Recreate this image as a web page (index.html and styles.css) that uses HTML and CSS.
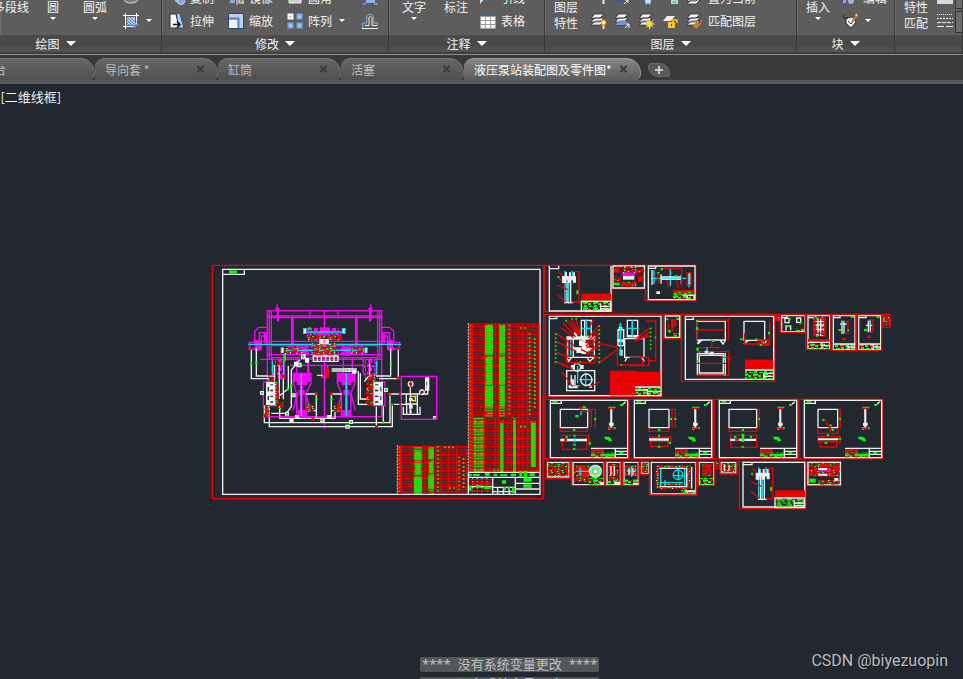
FILE: index.html
```
<!DOCTYPE html>
<html lang="zh-CN">
<head>
<meta charset="utf-8">
<title>液压泵站装配图及零件图</title>
<link rel="stylesheet" href="styles.css">
</head>
<body>
<header class="ribbon">
  <section class="panel panel-draw">
    <div class="tools">
      <button class="large">多段线</button>
      <button class="large">圆<i class="caret"></i></button>
      <button class="large">圆弧<i class="caret"></i></button>
      <div class="stack">
        <button class="tool" aria-label="椭圆"><svg class="icon" viewBox="0 0 16 16"><ellipse cx="8" cy="9" rx="7" ry="4" fill="#777" stroke="#ddd"/></svg></button>
        <button class="tool" aria-label="图案填充"><svg class="icon" viewBox="0 0 16 16"><path d="M2.500 0v16M13.500 0v11M0 2.500h16M0 13.500h10" stroke="#fff"/><path d="M4 4h8v8H4z" fill="#a9cbf5"/><path d="M4 7l5 5M4 4l8 8M7 4l5 5M4 10l2 2" stroke="#4e80c8"/><path d="M10 15l4-7M9 12h7M12 15v-5" stroke="#6fa8ff"/></svg><i class="caret"></i></button>
      </div>
    </div>
    <h2>绘图<i class="drop"></i></h2>
  </section>
  <section class="panel panel-modify">
    <div class="tools">
      <div class="stack">
        <button class="tool"><svg class="icon" viewBox="0 0 16 16"><circle cx="9" cy="9" r="3.500" fill="#9eb8dc"/><circle cx="12" cy="11" r="3.500" fill="#7fa4df" stroke="#cfe1ff"/></svg>复制</button>
        <button class="tool"><svg class="icon" viewBox="0 0 16 16"><path d="M1 1h6l3 14H1z" fill="#f4f4f4" stroke="#333"/><path d="M8 1h3l4 14h-5z" fill="#a9cdf2"/><path d="M11 1l4 14h-5" fill="none" stroke="#244d80"/><path d="M4 11.500h7M8 8.500l3 3-3 3" fill="none" stroke="#111" stroke-width="1.500"/></svg>拉伸</button>
      </div>
      <div class="stack">
        <button class="tool"><svg class="icon" viewBox="0 0 16 16"><path d="M1 13L7 3v10z" fill="#86aee5"/><path d="M9 2v13M11 13V3l5 10z" stroke="#eee" fill="#888"/></svg>镜像</button>
        <button class="tool"><svg class="icon" viewBox="0 0 16 16"><path d="M.5.5h15v15h-15z" fill="#b8d3f4" stroke="#2c4468"/><path d="M1 5.500h9.500V15" fill="none" stroke="#5786c5" stroke-width="2"/><path d="M1 7h8v8H1z" fill="#f2f2f2"/></svg>缩放</button>
      </div>
      <div class="stack stack-wide">
        <button class="tool"><svg class="icon" viewBox="0 0 16 16"><path d="M2 2h12v11H2z" fill="#ccd" stroke="#eee"/></svg>圆角</button>
        <button class="tool"><svg class="icon" viewBox="0 0 16 16"><path d="M1.500 1.500h4v4h-4z" fill="#aaa" stroke="#fff" stroke-width="2"/><path d="M10.500 1.500h4v4h-4zM1.500 10.500h4v4h-4zM10.500 10.500h4v4h-4z" fill="#c5dcfa" stroke="#78a8ee" stroke-width="2"/></svg>阵列<i class="caret"></i></button>
      </div>
      <div class="stack stack-icon">
        <button class="tool" aria-label="分解"><svg class="icon" viewBox="0 0 16 16"><path d="M4 5h9v8H4z" fill="#8fb4eb"/><path d="M1 14h3M12 14h4" stroke="#9cf"/></svg></button>
        <button class="tool" aria-label="偏移"><svg class="icon" viewBox="0 0 16 16" fill="none"><path d="M.7 15V10h4V5c0-5 7-5 7 0v5h4v2" stroke="#82b2f3"/><path d="M3 12.500h4V5c0-2 3-2 3 0v7.500h5M0 15.500h16" stroke="#eee"/></svg></button>
      </div>
    </div>
    <h2>修改<i class="drop"></i></h2>
  </section>
  <section class="panel panel-note">
    <div class="tools">
      <button class="large">文字<i class="caret"></i></button>
      <button class="large">标注</button>
      <div class="stack">
        <button class="tool"><svg class="icon" viewBox="0 0 16 16"><path d="M0 8h5l-5 6z" fill="#ddd"/></svg>引线</button>
        <button class="tool"><svg class="icon" viewBox="0 0 16 16"><path d="M0 0h16v16H0z" fill="#999"/><path d="M0 0h16v3H0z" fill="#4a6284"/><path d="M1 4h4v3H1zM6 4h4v3H6zM11 4h4v3h-4zM1 8h4v3H1zM6 8h4v3H6zM11 8h4v3h-4zM1 12h4v3H1zM6 12h4v3H6zM11 12h4v3h-4z" fill="#fff"/></svg>表格</button>
      </div>
    </div>
    <h2>注释<i class="drop"></i></h2>
  </section>
  <section class="panel panel-layer">
    <svg class="sprite" aria-hidden="true"><defs>
      <g id="sheets" stroke="#252525" stroke-width=".7"><path d="M0 12l4-4h9l-4 4zM0 9l4-4h9L9 9zM0 5l4-4h9L9 5z" fill="#f5f5f5"/></g>
    </defs></svg>
    <div class="tools">
      <button class="large">图层<br>特性</button>
      <div class="icon-grid">
        <button class="tool" aria-label="关闭图层"><svg class="icon" viewBox="0 0 16 16"><path d="M12.500 10v4" stroke="#eee" stroke-width="2"/></svg></button>
        <button class="tool" aria-label="隔离图层"><svg class="icon" viewBox="0 0 16 16"><path d="M0 12l3-3h6l-3 3z" fill="#315ba0"/><path d="M9 14l4-4M10 10h3v3" stroke="#eee" fill="none"/></svg></button>
        <button class="tool" aria-label="冻结图层"><svg class="icon" viewBox="0 0 16 16"><path d="M7 8l4 6M11 8l-4 6M6 11h6" stroke="#b9dcff" stroke-width="2"/></svg></button>
        <button class="tool" aria-label="锁定图层"><svg class="icon" viewBox="0 0 16 16"><path d="M8 9h7v5H8z" fill="#b4dbda"/><path d="M10 12h3" stroke="#387"/></svg></button>
        <button class="tool" aria-label="当前图层"><svg class="icon" viewBox="0 0 16 16"><use href="#sheets" y="2"/></svg></button>
        <button class="tool" aria-label="打开所有图层"><svg class="icon" viewBox="0 0 16 16"><use href="#sheets"/><path d="M12.500 11v5" stroke="#ddd" stroke-width="2"/><circle cx="12.500" cy="9.500" r="2.500" fill="#fff0a8" stroke="#f38a0c"/></svg></button>
        <button class="tool" aria-label="取消隔离"><svg class="icon" viewBox="0 0 16 16"><use href="#sheets"/><path d="M0 12l4-4h9l-4 4z" fill="#659de4"/><path d="M10 15l4-4M10.500 11H14v4" stroke="#fff" fill="none"/></svg></button>
        <button class="tool" aria-label="解冻图层"><svg class="icon" viewBox="0 0 16 16"><use href="#sheets"/><path d="M10.500 6v10M5.500 11h10M7 7.500l7 7M14 7.500l-7 7" stroke="#ffe898"/><circle cx="10.500" cy="11" r="3" fill="#ffd51f"/></svg></button>
        <button class="tool" aria-label="解锁图层"><svg class="icon" viewBox="0 0 16 16"><path d="M0 8l4-5h8L8 8z" fill="#f1f1f1"/><path d="M5 9h7v6H5z" fill="#ffc52a"/><path d="M10 9V7h4v3" stroke="#ffc52a" fill="none" stroke-width="1.500"/><path d="M8.500 11v2" stroke="#333"/></svg></button>
        <button class="tool" aria-label="匹配"><svg class="icon" viewBox="0 0 16 16"><use href="#sheets"/><path d="M6 12l4-3 4 2-4 5-4-2z" fill="#c77a27"/><path d="M13 11l2-4" stroke="#b5702b" stroke-width="2"/></svg></button>
      </div>
      <div class="stack">
        <button class="tool">置为当前</button>
        <button class="tool">匹配图层</button>
      </div>
    </div>
    <h2>图层<i class="drop"></i></h2>
  </section>
  <section class="panel panel-block">
    <div class="tools">
      <button class="large">插入<i class="caret"></i></button>
      <div class="stack">
        <button class="tool"><svg class="icon" viewBox="0 0 16 16"><path d="M0 10h3v3H0z" fill="#79aaf0"/><circle cx="8" cy="11" r="3" fill="#a7b2cc"/></svg>编辑</button>
        <button class="tool" aria-label="编辑属性"><svg class="icon" viewBox="0 0 16 16"><path d="M3 5l7-1 3 5-5 6-5-5z" fill="#f2f2f2" stroke="#333"/><path d="M0 1c0 5 3 5 5 4" stroke="#111" fill="none"/><path d="M5 8l3 3 3-4" stroke="#333" fill="none"/><path d="M9 9l5-7" stroke="#d77821" stroke-width="2"/><path d="M13 3l1-2" stroke="#f5c38c" stroke-width="2"/></svg><i class="caret"></i></button>
      </div>
    </div>
    <h2>块<i class="drop"></i></h2>
  </section>
  <section class="panel panel-props">
    <div class="tools">
      <button class="large">特性<br>匹配</button>
      <div class="stack stack-icon">
        <button class="tool" aria-label="线宽"><svg class="icon" viewBox="0 0 16 16"><path d="M0 9h16v5H0z" fill="#d8d8d8"/></svg></button>
        <button class="tool" aria-label="线型"><svg class="icon" viewBox="0 0 16 16" stroke="#eee"><path d="M0 1.500h16" stroke-dasharray="1 1"/><path d="M0 5.500h16" stroke-dasharray="2 1"/><path d="M0 9.500h16" stroke-dasharray="4 1"/><path d="M0 13.500h16" stroke-dasharray="7 2"/></svg></button>
      </div>
      <div class="fields"><button aria-label="线宽列表"></button><button aria-label="线型列表"></button></div>
    </div>
    <h2></h2>
  </section>
</header>
<nav class="tabs">
  <div class="tab tab-first"><button class="name">台</button></div>
  <div class="tab"><button class="name">导向套 *</button><button class="close" aria-label="关闭"></button></div>
  <div class="tab"><button class="name">缸筒</button><button class="close" aria-label="关闭"></button></div>
  <div class="tab"><button class="name">活塞</button><button class="close" aria-label="关闭"></button></div>
  <div class="tab active"><button class="name">液压泵站装配图及零件图*</button><button class="close" aria-label="关闭"></button></div>
  <button class="add" aria-label="新图形"></button>
</nav>
<main class="canvas">
<svg class="drawing" viewBox="0 84 963 595" preserveAspectRatio="xMinYMin meet">
<defs>
  <pattern id="rows" width="12" height="8" patternUnits="userSpaceOnUse"><path class="rf" d="M0 0h12v4H0z"/></pattern>
  <pattern id="text" width="24" height="24" patternUnits="userSpaceOnUse"><path class="gf" d="M0 3h24v5H0zM0 11h24v5H0zM2 19h20v5H2z"/></pattern>
  <pattern id="busy" width="33" height="27" patternUnits="userSpaceOnUse"><path class="rf" d="M0 0h14v5H8v6H0zM15 3h10v10h-6v3h-4zM27 0h4v14h-4zM3 12h10v10H6v3H3zM18 18h13v7h-9v2h-4z"/><path class="gf" d="M12 0h4v7h-4zM24 12h7v4h-7zM0 21h7v4H0zM12 15h7v4h-7z"/><path class="wf" d="M9 9h4v3H9zM24 6h3v4h-3zM12 21h4v3h-4z"/></pattern>
  <pattern id="parts" width="27" height="24" patternUnits="userSpaceOnUse"><path class="mf" d="M0 0h9v9H0zM12 3h12v6H12zM3 12h12v9H3zM21 12h3v12h-3z"/><path class="gf" d="M9 9h3v3H9z"/><path class="rf" d="M18 9h6v3h-6z"/></pattern>
  <pattern id="redfill" width="18" height="21" patternUnits="userSpaceOnUse"><path class="rf" d="M0 0h18v21H0z"/><path fill="#bd1112" d="M6 0h1v21H6zM0 9h18v1H0z"/></pattern>
  <pattern id="block" width="30" height="18" patternUnits="userSpaceOnUse"><path class="gf" d="M0 0h12v6H0zM15 3h9v6h-9zM3 9h9v6H3zM18 12h12v3H18z"/><path class="wf" d="M12 0h3v3h-3zM0 15h15v1H0z"/><path class="rf" d="M0 6h9v3H0zM21 0h6v3h-6z"/></pattern>
  <g id="frame4">
    <path class="r" d="M-16-3H234V175H-16z"/><path class="w" d="M0 0H232V172H0zM0 9H33V0"/>
    <path class="gf" d="M6 2h15v5H6zM209 11h9v6h-9zM174 19h21v5h-21zM174 80h6v9h-6zM190 80h6v7h-6z"/>
    <path class="w" d="M218 12l8-8M183 25V78" /><path class="wf" d="M180 27h6v40h4v9h-4v6h-6v-6h-4v-9h4z"/>
    <path class="r" d="M174 24h18M174 84h18"/><path class="gf" d="M160 109h15l6 4 5 10h-12v-5h-8z"/>
    <path fill="url(#redfill)" d="M122 145h39v12h-39z"/><path fill="url(#block)" d="M122 157h75v15h-75z"/><path class="w" d="M122 144H232M195 144v28M195 153h37M195 162h37"/>
    <path class="gf" d="M207 154h12v8h-12zM165 161h29v7h-29z"/>
  </g>
  <g id="pump">
    <path class="c" d="M66 32V130M88 32v30M77 62v69"/><path class="w" d="M72 55v74M83 55v74M64 128h27"/><path class="wf" d="M57 48h9V37h6v11h6V37h6v11h6V37h6v12h3v19h-9v-9h-6v10h-9V59h-6v10H57z"/>
    <path class="r" d="M95 35h13v91H88M46 35l13 10M43 49l14 13M43 75l31 14M43 103l24 22"/><path class="gf" d="M100 91h6v12h-6zM44 48h5v6h-5z"/>
    <path fill="url(#redfill)" d="M115 101h90v25h-90z"/><path fill="url(#block)" d="M115 122h90v31h-90z"/><path class="w" d="M115 124h88v29h-88zM173 131v22M173 139h30M173 147h30"/>
  </g>
</defs>

<!-- Hydraulic assembly -->
<g transform="translate(205 260) scale(.33333)">
  <path class="r" d="M22 16H1016V716H22z"/><path class="w" d="M53 28H1005V703H53zM53 43h65V28"/><path class="gf" d="M72 31h24v10H72z"/>
  <path class="m" d="M187 152H530V470H187zM193 152v148M199 152v148M518 152v148M524 152v148M187 168H530M187 173H530M217 133v50M220 145v40M497 133v50M494 145v40M260 172v90M264 172v90M452 172v90M456 172v90M315 152v17M399 152v17M358 152V506M148 244H568M200 257H520M187 284H530M200 293H518M165 298H530"/>
  <path class="m" d="M187 202H161l-12 12v28M187 218h-24v54M187 228h-18v43M530 202h24l12 12v28M530 218h24v54M530 228h18v43M133 247h32v20h-32zM552 247h32v20h-32z"/>
  <path class="mf" d="M211 143h12v6h-12zM490 143h12v6h-12zM149 240h15v32h-15zM550 240h15v32h-15zM177 220h12v30h-12zM528 220h12v30h-12z"/>
  <path fill="url(#parts)" d="M305 204h104v24H305zM243 257h235v29H243zM200 297h40v60h-40zM476 297h42v60h-42z"/><path class="mf" d="M344 202h28v24h-28zM280 260h26v27h-26zM412 260h26v27h-26z"/>
  <path class="c" d="M130 253H588M305 216H420M235 271H487M202 302v40M514 302v40M236 302v40"/>
  <path fill="url(#busy)" d="M306 227h103v15H306zM322 249h75v42h-75zM226 265h65v17h-65zM438 265h46v17h-46z"/>
  <path class="cf" d="M294 204h11v18h-11zM412 204h10v18h-10zM227 262h10v18h-10zM479 262h9v18h-9z"/><path class="wf" d="M297 207h6v12h-6zM413 207h5v12h-5zM230 264h5v13h-5zM481 264h4v13h-4z"/>
  <path class="w" d="M325 288h74v16h-74zM337 288v16M349 288v16M362 288v16M374 288v16M387 288v16M345 239h25v12h-25z"/><path class="wf" d="M345 238h11v13h-11zM359 238h11v13h-11z"/>
  <path class="m" d="M255 316H475M275 295v45M308 295v45M311 295v45M415 295v45M442 295v45M475 295v45M350 316v35h18v-35M265 340h53v30l-15 30v66h-28v-65l-10-31zM397 340h53v30l-13 31v65h-28v-66l-12-30zM277 400l-13 52M303 400l12 52M410 400l-13 52M438 400l13 52"/>
  <path class="mf" d="M264 342h53v23h-11v10h-31v-10h-11zM398 342h52v23h-11v10h-30v-10h-11zM281 390h18v15h-18zM415 390h18v15h-18zM279 450h26v18h-26zM412 450h26v18h-26zM285 373h8v80h-8zM420 373h8v80h-8z"/><path class="c" d="M289 342v126M424 342v126"/>
  <path class="w" d="M139 265v91h56M154 265v83h56M580 265v91H522M557 265v83h-44M178 438v50H555v-86h35M193 438v62H562v-67h28M224 440v35H390v-22M199 460h45l15-20V330l25-30M208 315v92l-10 8M223 310v107M250 318v68l-28 22M235 350v68M380 333h73M380 327h73v12M460 333v100h27M466 340v77h21M494 310v35l-16 20M334 402v70M379 402v70M379 402h32M302 402h32M535 437v50M514 440v60M322 452h12M381 452h12"/>
  <path class="m" d="M175 366h37v71h-37zM505 366h35v71h-35z"/><path class="wf" d="M183 366h27v70h-27zM505 366h29v70h-29z"/>
  <path fill="#212830" d="M188 381h4v13h-4zM196 373h8v3h-8zM196 389h8v5h-8zM188 408h4v12h-4zM196 407h8v4h-8zM196 424h8v4h-8zM510 373h10v3h-10zM526 381h3v13h-3zM510 389h10v5h-10zM510 407h10v4h-10zM526 408h3v12h-3zM510 424h10v4h-10z"/>
  <path fill="url(#busy)" d="M210 365h12v73h-12zM483 365h22v73h-22zM176 435h18v38h-18zM218 427h17v22h-17zM304 430h23v26h-23zM386 430h23v26h-23zM190 345h18v20h-18zM489 340h24v23h-24z"/>
  <path class="wf" d="M165 393h12v12h-12zM288 282h14v14h-14zM267 305h12v14h-12zM276 308h14v14h-14zM300 294h12v14h-12zM422 324h13v12h-13zM441 330h12v12h-12zM240 455h12v12h-12zM253 475h13v12h-13zM270 465h12v12h-12zM346 474h13v13h-13zM366 465h13v12h-13zM421 494h14v12h-14zM432 480h12v12h-12zM260 400h12v12h-12zM537 384h12v12h-12zM684 468h12v12h-12z"/>
  <path class="rf" d="M134 260h9v9h-9zM575 260h10v9h-10zM575 350h10v9h-10zM363 325h10v30h-10zM330 397h9v9h-9zM374 397h9v9h-9zM549 398h10v9h-10zM581 398h10v9h-10zM557 429h10v9h-10zM582 429h9v9h-9zM510 496h9v9h-9zM176 463h10v10h-10zM218 305h10v10h-10zM231 345h10v10h-10zM319 474h9v9h-9z"/>
  <path class="gf" d="M168 396h6v6h-6zM291 286h6v6h-6zM280 312h6v6h-6zM135 307h7v8h-7zM151 304h7v8h-7zM554 307h7v8h-7zM245 383h8v8h-8zM255 373h7v8h-7zM235 282h8v22h-8zM310 202h8v8h-8zM425 327h6v6h-6zM243 458h6v6h-6zM349 478h6v6h-6zM425 498h6v6h-6zM435 483h6v6h-6zM532 484h7v7h-7zM262 403h6v6h-6zM540 387h6v6h-6zM687 471h6v6h-6zM330 414h8v8h-8zM376 414h7v8h-7zM553 400h4v5h-4zM559 431h5v5h-5z"/><path class="yf" d="M336 344h18v4h-18zM617 407h16v4h-16zM629 407h4v18h-4zM617 420h16v4h-16z"/>
  <path class="m" d="M589 349H695V478H589z"/><path class="w" d="M589 402h79v-35M589 433h29M616 372v90M604 402v30h33v-30M595 440v23h50v-23M605 433v29M637 433v29M662 354h9v36h-9z"/><circle class="w" cx="617" cy="372" r="7"/><circle class="w" cx="651" cy="397" r="7"/><path class="wf" d="M612 414h11v8h-11zM612 434h11v12h-11zM614 450h6v9h-6zM662 352h10v14h-10zM664 376h5v14h-5z"/><path class="r" d="M617 364v17M646 403l9-9"/>
</g>
<!-- Parts lists -->
<g transform="translate(390 310) scale(.33333)">
  <path fill="url(#text)" d="M285 42h24v278h-24zM327 42h18v278h-18zM72 408h25v144H72zM114 408h18v144h-18zM330 332h11v154h-11zM369 322h9v165h-9zM422 334h16v137h-16zM250 323h33v164h-33z"/>
  <path fill="url(#rows)" d="M235 40H448V487H235zM22 406H235V552H22z"/>
  <path class="rf" d="M238 40h11v447h-11zM25 406h11v146H25zM445 40h3v447h-3z"/><path class="r thin" d="M283 40v447M316 40v447M325 40v447M353 40v447M363 40v447M385 40v447M398 40v447M413 40v447M70 406v146M105 406v146M115 406v146M138 406v146M153 406v146M175 406v146M200 406v146"/>
  <path class="gf" opacity=".75" d="M285 46h24v86h-24zM287 140h20v84h-20zM285 228h24v62h-24zM329 46h16v84h-16zM327 140h18v84h-18zM330 228h14v62h-14zM73 424h22v26H73zM76 458h16v34H76zM72 500h24v52H72zM115 416h16v30h-16zM117 456h12v32h-12zM114 496h18v40h-18zM331 340h9v146h-9zM370 330h7v156h-7zM423 338h14v132h-14z"/>
  <path class="dash" d="M235 40v447M22 406v146"/>
  <path class="gdash" d="M358 44v276M419 70v245M434 85v210M390 54h18M390 350h18M144 408v144M163 412h34M207 440v105M221 445v90M255 323v164M265 323v164M275 323v164M178 534h18M310 480h20"/><path class="gdash" opacity=".6" d="M241 44v440M28 410v140"/>
  <path class="w" d="M235 487H448M235 502H448M235 530H308M308 502v50M376 502v50M376 520h72M376 537h72M235 487v65M308 532h68M308 545h68M323 532v20M340 532v20M358 532v20"/><path class="wdash" d="M248 504v46M262 504v46M276 504v46M291 504v46"/>
  <path class="r" d="M238 509h66M238 517h66M238 525h66M238 543h66"/>
  <path class="gf" d="M237 491h8v8h-8zM249 492h20v6h-20zM285 489h14v10h-14zM311 491h10v7h-10zM331 493h21v5h-21zM362 491h16v7h-16zM388 483h9v17h-9zM401 482h10v18h-10zM419 490h15v8h-15zM400 504h25v11h-25zM400 523h25v10h-25zM336 511h12v10h-12zM237 527h7v16h-7zM258 525h15v8h-15zM282 529h20v8h-20zM340 531h8v10h-8zM353 530h7v10h-7zM366 532h7v16h-7z"/>
</g>
<!-- Upper detail sheets -->
<g transform="translate(543 260) scale(.33333)">
  <path class="r" d="M5 16H206V155H5zM208 16h99v70h-99zM307 16H458V122H307zM7 163H356V410H7zM362 163h50v73h-50zM415 163H695V364H415z"/>
  <path class="w" d="M19 17v136H204V18M19 26h28V17M210 18h94v66h-94zM316 18h140v101H316zM316 25h22v-7M19 169H354V407H19zM19 176h22v-7M367 168h43v64h-43zM427 169H692V358H427zM427 178h24v-9"/>
  <use href="#pump"/>
  <path fill="url(#busy)" d="M238 19h45v22h-45zM212 24h20v13h-20zM212 50h22v12h-22zM282 25h22v13h-22zM285 50h18v14h-18zM235 65h45v16h-45z"/><path class="wf" d="M240 47h34v12h-34z"/><path class="m" d="M237 40h38M237 44h38"/><path class="rf" d="M216 20h14v18h-14zM285 48h14v16h-14zM243 70h24v9h-24z"/><path class="gf" d="M213 68h17v8h-17z"/>
  <path class="c" d="M325 55h105M382 27v52M333 30v42M437 40v42"/><path class="w" d="M327 30v45M354 43v28M415 43v28M354 51h61M354 58h61M441 37v38"/><path class="r" d="M352 25h64v55M345 38v32M371 60l7 22M400 60l7 22M432 38h12v38h-12z"/><path class="wf" d="M340 94h11v8h-11z"/><path class="gf" d="M353 25h7v6h-7zM395 45h6v6h-6zM343 36h6v5h-6z"/><path fill="url(#redfill)" d="M390 90h64v16h-64z"/><path fill="url(#block)" d="M390 96h64v21h-64z"/><path class="w" d="M418 106h36v12M432 106v12"/>
  <path class="w" d="M115 181h30v48h-30zM74 237h80v55H74zM91 237v53M125 181v48M71 332h84v60H71zM85 345v40M96 345v35M72 292l5 12 9-12M132 292l8 12 14-12M245 236h58v56h-58zM253 181h31v49h-31zM268 181v49M225 209h17v48h-17zM232 190v95M252 292l-6 12M296 292l8 12M252 292h45"/>
  <path class="wf" d="M70 229h88v8H70zM93 215h10v16H93zM118 230h9v20h-9zM93 262h22v9H93zM116 250h22v32h-22zM138 263h11v11h-11zM108 241h10v17h-10zM100 270h17v9h-17zM227 200h11v12h-11zM223 238h20v9h-20zM230 269h9v18h-9zM252 225h37v7h-37zM84 315h12v12H84zM112 315h10v12h-10zM83 358h10v20H83zM77 375h27v10H77zM138 375h9v9h-9z"/>
  <path class="c" d="M130 178v52M112 205h35M83 238v48M233 190v98M268 180v54M251 205h35M104 318v52M128 338v42M110 359h40M80 377h30"/><circle class="w" cx="130" cy="359" r="17"/><circle class="w" cx="102" cy="322" r="11"/>
  <path class="r" d="M68 181l38 45M60 190l38 40M52 202l40 32M40 220l56 39M40 245l55 27M40 277l35 15M40 305l48 20M78 181l32 46M88 180l22 43M99 180l13 40M169 195l-33 39M169 209l-38 40M169 221l-40 38M169 234l-38 30M169 246l-38 38M169 260l-40 20M165 250l60 12M165 311l68-49M169 295l-55-27M40 305l37 18M57 337l32 42M170 366l-32 15M323 202l-39 30M323 215l-46 30M323 228l-52 12M70 237v71h86v-18M223 264v51h76v-15M308 183h30v119h-22M260 292h57v25h-57M154 178l-14 20M102 300v12"/>
  <path class="gdash" d="M67 182h10M85 177h18M169 195v118M323 203v65M38 220v90M337 230v12M110 306h9M233 315h8"/><path class="rf" d="M73 285h9v6h-9zM150 285h9v6h-9zM94 205h8v8h-8zM290 287h10v7h-10z"/><path class="yf" d="M118 242h12v4h-12z"/>
  <path fill="url(#redfill)" d="M201 332h79v74h-79zM279 335h73v48h-73z"/><path fill="url(#block)" d="M279 382h73v23h-73z"/><path class="w" d="M276 381h76M314 387v18M314 395h38M276 390h36"/>
  <path class="r" d="M388 177v35M385 205l13-9v-17M376 190v25M384 180h12M374 214h14"/><path class="rf" d="M384 178h11v22h-11z"/><path class="gf" d="M370 175h6v6h-6zM400 174h8v6h-8zM376 209h7v9h-7z"/><path fill="url(#block)" d="M388 220h20v10h-20z"/>
  <path class="w" d="M463 184h84v56h-84zM468 240l-4 12 13-12M531 240l9 12 8-12M463 281h84v63h-84zM469 286h72v53h-72zM603 184h62v57h-62zM609 241l-6 12 14-12M656 241l8 12 7-12"/><path class="r" d="M463 241V180h93v62M456 210h90M460 263h70M463 275h94v70h-94M460 310h90M550 184l10-10M680 184v68h-75v-34M663 241l-17 15M530 290l35 6M506 241v20M470 347h75M645 240h32v16h-32z"/><path class="c" d="M492 262v18M469 275v12M545 280v20"/><path class="gf" d="M459 180h7v6h-7zM459 202h7v7h-7zM460 263h7v9h-7zM508 240h6v6h-6zM462 300h6v6h-6zM542 341h7v6h-7zM675 215h6v8h-6zM592 234h6v7h-6zM637 235h6v6h-6zM651 252h6v5h-6z"/><path class="wf" d="M485 272h11v9h-11zM500 275h12v9h-12z"/>
  <path fill="url(#redfill)" d="M606 299h84v32h-84z"/><path fill="url(#block)" d="M606 332h84v26h-84z"/><path class="w" d="M606 330h85M662 340v18M662 349h29M662 340h29"/>
</g>
<g transform="translate(720 260) scale(.33333)">
  <path class="w" d="M185 167h70v48h-70zM185 173h16v-6M264 167h65v99h-65zM264 173h23v-6M340 167h65v102h-65zM340 173h20v-6M416 167h66v102h-66zM416 173h22v-6"/>
  <path class="r" d="M166 163h14v19h-14zM181 163h75v54h-75zM257 163h75v106h-75zM333 163h75v108h-75zM409 163h76v108h-76zM487 163h23v39h-23z"/>
  <path fill="url(#busy)" d="M168 167h11v13h-11zM280 172h38v58h-38zM490 168h18v30h-18z"/><path class="w" d="M294 176v52M302 176v52M287 185h28M287 195h28M287 208h28M195 175h12v13h-12zM230 174h12v13h-12zM198 212v-14h14v13M366 182v40M372 182v40M360 192h20M445 182v35M451 182v35M438 196h20"/>
  <path class="r" d="M283 185v35h31v-43M372 184h12v36h-12M451 180h8v35h-8M366 237h12M443 226l8 10"/><path class="rf" d="M367 233h10v8h-10zM443 226h8v8h-8z"/><path class="gf" d="M200 195h10v7h-10zM205 175h8v6h-8zM238 185h6v8h-6zM392 167h10v6h-10zM470 168h9v7h-9zM355 207h9v6h-9zM432 207h10v6h-10zM382 208h5v6h-5z"/>
  <path class="c" d="M366 182v15M450 179v20M492 172v14"/><path fill="url(#redfill)" d="M264 237h65v12h-65z"/><path fill="url(#block)" d="M222 206h32v9h-32zM264 245h65v21h-65zM341 252h63v16h-63zM417 252h64v16h-64z"/><path class="w" d="M264 247h65M305 247v19M305 257h24M340 252h66M384 252v17M384 261h21M416 252h66M460 252v17M460 261h22"/>
</g>
<!-- Plate sheets -->
<g transform="translate(543 396) scale(.33333)">
  <use href="#frame4" x="22" y="13"/><use href="#frame4" x="274" y="13"/><use href="#frame4" x="529" y="13"/><use href="#frame4" x="784" y="13"/>
  <path class="w" d="M52 40h82v55H52zM318 40h60v55h-60zM558 40h83v55h-83zM825 40h59v55h-59z"/>
  <path class="r" d="M52 95v11h81V95M113 48V34h20M115 46h30v48M134 40h23v55M52 118h85v23M58 123v37h73v-37M90 140l8 12M318 95v11h60V95M378 40h19v55M387 40v55M320 123h63v14h-63zM323 137v14h51v-14M558 95v11h83V95M641 40h8v55M558 118h83v36h-78v-36M825 95v17h60V95M885 40h7v55M846 70l14 30M862 86v22M825 121h67v17h-67zM832 138v15h49v-15"/>
  <path class="wf" d="M52 128h80v8H52zM318 127h60v7h-60zM561 128h78v7h-78zM825 127h60v6h-60z"/><path class="rf" d="M64 128h8v8h-8zM345 135h15v4h-15zM576 128h13v6h-13zM860 134h10v4h-10z"/><path class="c" d="M95 126v13M114 47v10"/>
  <path class="gf" d="M90 99h7v6h-7zM97 57h10v7H97zM120 30h7v6h-7zM153 66h6v7h-6zM137 139h7v7h-7zM91 143h7v6h-7zM90 156h7v6h-7zM68 120h6v6h-6zM92 116h6v6h-6zM345 99h7v6h-7zM381 66h6v6h-6zM394 66h6v6h-6zM345 116h6v6h-6zM377 138h7v6h-7zM345 149h7v6h-7zM597 99h6v6h-6zM646 66h5v6h-5zM596 113h8v25h-8zM596 150h6v6h-6zM573 120h7v6h-7zM621 120h6v6h-6zM838 69h6v6h-6zM860 85h6v6h-6zM866 99h7v6h-7zM889 66h5v6h-5zM851 115h7v6h-7zM845 138h7v6h-7zM887 126h7v6h-7z"/>
  <path class="w" d="M13 199h65v44H13zM90 199h92v67H90zM192 199h40v67h-40zM243 199h43v67h-43zM296 198h21v34h-21zM325 199h134v95H325zM469 199h43v67h-43zM534 199h45v32h-45z"/>
  <path class="r" d="M0 0V306M10 196h71v51H10zM85 196h98v73H85zM187 196h47v73h-47zM239 196h49v73h-49zM293 196h26v39h-26zM319 196h142v101H319zM465 196h49v73h-49zM516 196h14v22h-14zM531 196h51v38h-51z"/>
  <path fill="url(#busy)" d="M15 201h61v39H15zM93 207h45v50H93zM195 204h30v47h-30zM246 208h34v32h-34zM298 200h17v30h-17zM338 207h104v11H338zM338 219h10v58h-10zM432 219h10v58h-10zM349 264h82v15h-82zM478 203h27v38h-27zM517 198h12v18h-12zM537 202h39v27h-39z"/>
  <path class="rf" d="M103 208h23v10h-23zM120 218h13v27h-13zM202 210h14v24h-14zM482 205h18v12h-18zM483 219h9v18h-9z"/><circle cx="157" cy="226" r="18" stroke="#eee" stroke-width="4" fill="#20d7d4"/><circle cx="157" cy="226" r="12" stroke="#f5ed18" stroke-width="4" fill="none"/><circle cx="157" cy="226" r="6" fill="#fff"/>
  <path class="c" d="M98 226h40M111 214v26M265 210v32M252 225h28M353 217v54M353 217h72v54M355 260h65M366 252v20M389 239h32M406 220v33"/><circle class="c" cx="405" cy="236" r="14"/><path class="w" d="M258 215v22M270 215v22M349 217h82v55h-82M446 213v65M204 210v28M214 210v28M545 206v20M558 206v20"/>
  <path fill="url(#block)" d="M137 246h44v21h-44zM193 253h38v13h-38zM244 249h41v17h-41zM414 280h44v14h-44zM471 245h40v21h-40z"/><path class="wf" d="M170 258h13v9h-13zM427 283h30v6h-30zM214 258h18v8h-18zM270 260h16v6h-16z"/>
</g>
<g transform="translate(715 396) scale(.33333)">
  <path class="r" d="M73 196h199v142H73zM277 196h101v73H277z"/><path class="w" d="M84 199h185v134H84zM84 206h27v-7M279 199h97v67h-97z"/>
  <use href="#pump" x="65" y="182"/>
  <path fill="url(#busy)" d="M282 202h30v37h-30zM310 200h35v43h-35zM344 202h30v40h-30zM310 252h63v14h-63z"/><path class="rf" d="M316 203h29v10h-29zM283 228h15v11h-15zM352 206h18v15h-18zM346 230h14v12h-14z"/><path class="wf" d="M310 216h27v6h-27zM310 233h27v6h-27zM358 246h12v9h-12z"/><path class="m" d="M308 225h38"/><path class="gf" d="M283 248h19v12h-19z"/>
</g>
</svg>
<p class="view">][二维线框]</p>
<div class="log">
  <p><span>****</span><span>没有系统变量更改</span><span>****</span></p>
  <p class="latest"><span>****</span><span>没有系统变量更改</span><span>****</span></p>
</div>
<p class="credit">CSDN @biyezuopin</p>
</main>
</body>
</html>
```
FILE: styles.css
```
* { box-sizing: border-box; }
body {
  margin: 0;
  height: 100vh;
  display: flex;
  flex-direction: column;
  overflow: hidden;
  background: #212830;
  color: #f2f2f2;
  font: 12px/16px "Noto Sans CJK SC", "Liberation Sans", sans-serif;
}
button { margin: 0; padding: 0; border: 0; background: none; color: inherit; font: inherit; white-space: nowrap; }
p, h2 { margin: 0; font-weight: 400; }

/* Ribbon */
.ribbon { display: flex; flex: none; margin-top: -14px; background: #5d5d5d; border-bottom: 1px solid #8c8c8c; }
.panel { flex: none; border-right: 1px solid #3b3b3b; box-shadow: inset 1px 0 #6c6c6c; }
.panel-draw { width: 162px; }
.panel-modify { width: 227px; }
.panel-note { width: 156px; }
.panel-layer { width: 252px; }
.panel-block { width: 98px; }
.panel-props { flex: 1; overflow: hidden; }
.tools { display: flex; height: 49px; }
.tools > * { flex: none; }
.panel h2 {
  display: flex; align-items: center; justify-content: center; gap: 6px;
  height: 19px; font-size: 12px; line-height: 18px;
  background: linear-gradient(#4b4b4b, #484848 10px, #565656 17px);
  border-bottom: 2px solid #3d3d3d;
}
.panel-draw h2 { padding-right: 50px; }
.large { display: flex; flex-direction: column; align-items: center; width: 42px; padding-top: 13px; }
.panel-draw .tools { margin-left: -10px; }
.large .caret { margin-top: 2px; }
.stack { display: flex; flex-direction: column; width: 59px; }
.stack-wide { width: 75px; }
.stack-icon { width: 16px; }
.tool { display: flex; align-items: center; gap: 5px; height: 23px; }
.icon { display: block; flex: none; width: 16px; height: 16px; }
.sprite { position: absolute; width: 0; height: 0; }
.caret { border: 3px solid transparent; border-top-color: #fff; border-bottom: 0; }
.tool .caret { margin-left: 2px; }
.drop { border: 5px solid transparent; border-top-color: #fff; border-bottom: 0; }
.panel-draw .stack { margin-left: 7px; }
.panel-modify .tools { padding-left: 7px; }
.panel-note .tools { padding-left: 4px; }
.panel-note .stack { margin-left: 3px; }
.icon-grid { display: grid; grid-template-columns: repeat(5, 24px); margin-left: 4px; height: 46px; }
.panel-layer .stack { margin-left: -3px; }
.panel-block .stack { margin-left: 4px; }
.panel-block .tool { gap: 4px; }
.fields { display: flex; flex-direction: column; gap: 2px; width: 24px; margin-left: 2px; padding-top: 1px; }
.fields button { height: 22px; background: #6a6a6a; border: 1px solid #333; }

/* Drawing tabs */
.tabs { display: flex; flex: none; height: 29px; padding-top: 3px; background: #383838; border-bottom: 4px solid #5b5b5b; }
.tab {
  display: flex; align-items: center; justify-content: space-between;
  width: 123px; padding: 0 12px 0 10px; color: #bcbcbc;
  background: linear-gradient(#666, #505050);
  border-top: 1px solid #777; border-right: 1px solid #717171;
  border-radius: 9px 15px 6px 0;
}
.tab-first { width: 95px; padding-left: 0; border-radius: 0 15px 6px 0; }
.tab-first .name { margin-left: -6px; }
.tab.active { width: 177px; color: #fff; background: linear-gradient(#858585, #5b5b5b); border-color: #999; }
.close { position: relative; width: 9px; height: 9px; }
.close::before, .close::after { content: ""; position: absolute; left: 0; top: 3px; width: 9px; height: 2px; background: #3c3c3c; transform: rotate(45deg); }
.close::after { transform: rotate(-45deg); }
.add { position: relative; width: 22px; height: 14px; margin: 5px 0 0 7px; background: #595959; border: 1px solid #686868; border-radius: 3px 10px 2px 10px; }
.add::before, .add::after { content: ""; position: absolute; background: #ccc; }
.add::before { left: 6px; top: 5px; width: 8px; height: 2px; }
.add::after { left: 9px; top: 2px; width: 2px; height: 8px; }

/* Model space */
.canvas { position: relative; flex: 1; min-height: 0; overflow: hidden; }
.drawing { display: block; width: 100%; height: 100%; }
.view { position: absolute; left: -4px; top: 4px; font-size: 13px; line-height: 18px; }
.log { position: absolute; left: 420px; bottom: -13px; display: flex; flex-direction: column; gap: 5px; font: 13px/15px "Noto Sans", "Noto Sans CJK SC", sans-serif; color: #c0c0c0; }
.log p { display: flex; gap: 7px; height: 15px; padding: 0 2px; background: #54575a; border-radius: 2px; }
.log .latest { color: #fff; }
.credit { position: absolute; right: 15px; bottom: 8px; font: 16px/20px Roboto, sans-serif; color: #b9bcbe; text-shadow: 1px 1px #15191e; }

/* Layer colours */
.r, .w, .c, .m { fill: none; stroke-width: 4; }
.r { stroke: #f00000; }
.w { stroke: #f0f0f0; }
.c { stroke: #00e5ee; }
.m { stroke: #f0f; }
.thin { stroke-width: 3; }
.rf { fill: #f00000; }
.wf { fill: #f0f0f0; }
.gf { fill: #0f0; }
.cf { fill: #00e5ee; }
.mf { fill: #f0f; }
.yf { fill: #f5ed00; }
.dash { fill: none; stroke: #ddd; stroke-width: 3; stroke-dasharray: 6 3; }
.wdash { fill: none; stroke: #ddd; stroke-width: 3; stroke-dasharray: 5 4; }
.gdash { fill: none; stroke: #0f0; stroke-width: 5; stroke-dasharray: 5 7; }
```
